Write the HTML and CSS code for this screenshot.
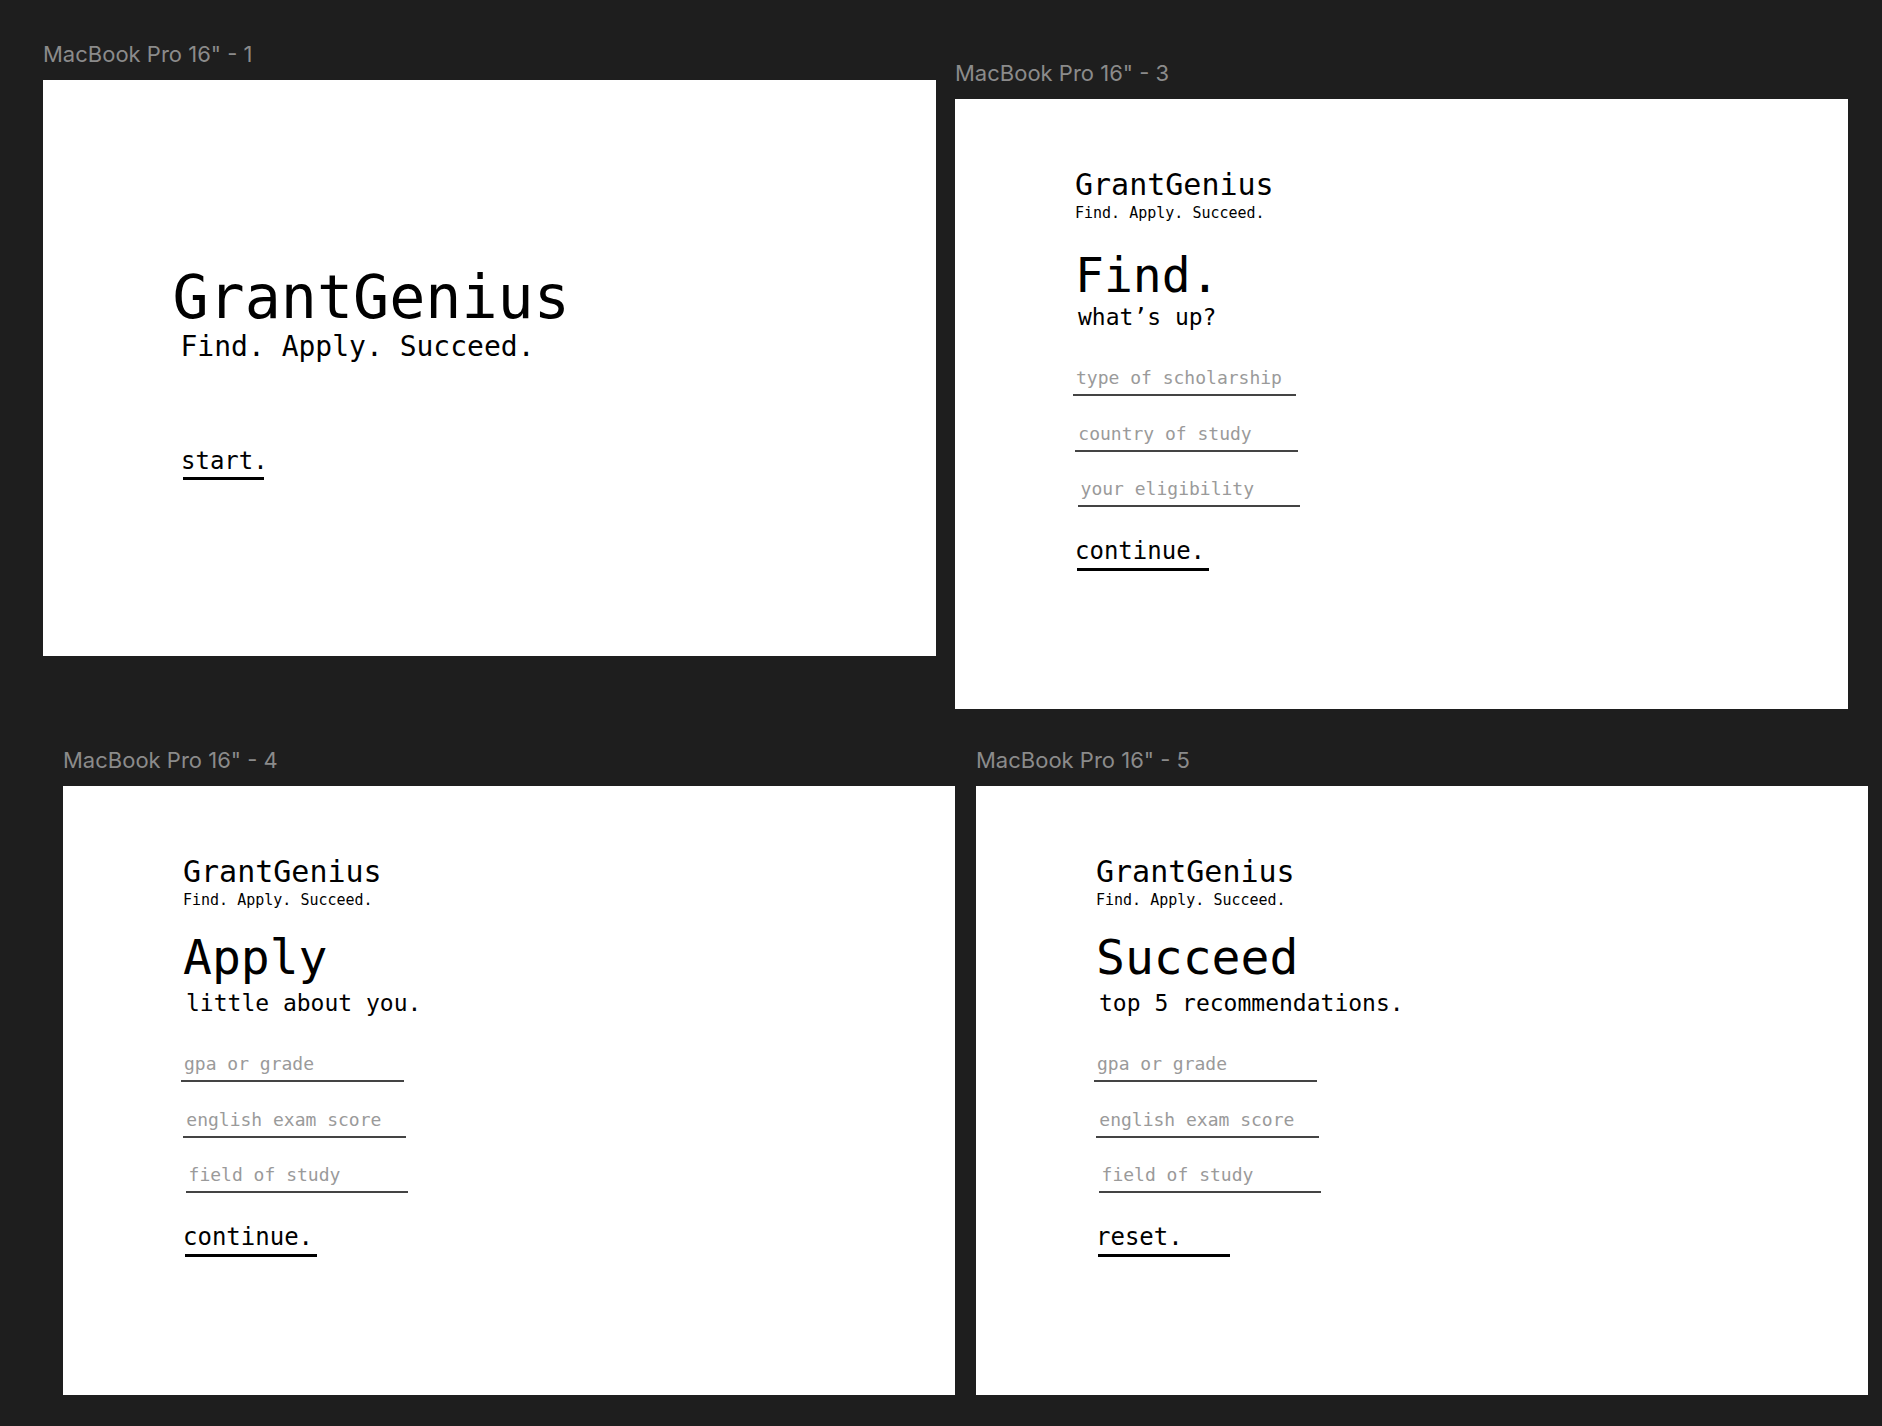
FILE: index.html
```html
<!DOCTYPE html>
<html lang="en">
<head>
<meta charset="utf-8">
<title>GrantGenius – frames</title>
<link rel="stylesheet" href="styles.css">
</head>
<body>
<main class="canvas">
  <div class="row row-top">
    <section class="board board-1">
      <div class="board-label">MacBook Pro 16" - 1</div>
      <div class="frame frame-short">
        <div class="splash">
          <h1 class="splash-title">GrantGenius</h1>
          <p class="splash-tagline">Find. Apply. Succeed.</p>
          <a class="cta cta-start">start.</a>
        </div>
      </div>
    </section>

    <section class="board board-3">
      <div class="board-label">MacBook Pro 16" - 3</div>
      <div class="frame">
        <div class="screen screen-find">
          <div class="brand">GrantGenius</div>
          <div class="brand-tag">Find. Apply. Succeed.</div>
          <h2 class="step-title">Find.</h2>
          <p class="step-sub">what’s up?</p>
          <div class="fields">
            <div class="field">type of scholarship</div>
            <div class="field">country of study</div>
            <div class="field">your eligibility</div>
          </div>
          <a class="cta">continue.</a>
        </div>
      </div>
    </section>
  </div>

  <div class="row row-bottom">
    <section class="board board-4">
      <div class="board-label">MacBook Pro 16" - 4</div>
      <div class="frame">
        <div class="screen">
          <div class="brand">GrantGenius</div>
          <div class="brand-tag">Find. Apply. Succeed.</div>
          <h2 class="step-title">Apply</h2>
          <p class="step-sub">little about you.</p>
          <div class="fields">
            <div class="field">gpa or grade</div>
            <div class="field">english exam score</div>
            <div class="field">field of study</div>
          </div>
          <a class="cta">continue.</a>
        </div>
      </div>
    </section>

    <section class="board board-5">
      <div class="board-label">MacBook Pro 16" - 5</div>
      <div class="frame">
        <div class="screen">
          <div class="brand">GrantGenius</div>
          <div class="brand-tag">Find. Apply. Succeed.</div>
          <h2 class="step-title">Succeed</h2>
          <p class="step-sub">top 5 recommendations.</p>
          <div class="fields">
            <div class="field">gpa or grade</div>
            <div class="field">english exam score</div>
            <div class="field">field of study</div>
          </div>
          <a class="cta">reset.</a>
        </div>
      </div>
    </section>
  </div>
</main>
</body>
</html>
```
FILE: styles.css
```css
html, body {
  margin: 0;
  background: #1e1e1e;
}

body {
  font-family: Inter, "Noto Sans", sans-serif;
  min-height: 1426px;
}

.canvas {
  padding-top: 42px;
}

.row {
  display: flex;
  align-items: flex-start;
}

.row-top {
  padding-left: 43px;
}

.row-bottom {
  padding-left: 63px;
  margin-top: 39px;
}

.board-3 {
  margin-left: 19px;
  margin-top: 19px;
}

.board-5 {
  margin-left: 21px;
}

.board-label {
  height: 24px;
  line-height: 24px;
  font-size: 22px;
  color: #8b8b8b;
  margin-bottom: 14px;
  white-space: nowrap;
}

.frame {
  background: #fff;
  width: 893px;
  height: 610px;
  box-sizing: border-box;
  font-family: "DejaVu Sans Mono", "Liberation Mono", monospace;
  color: #000;
}

.frame-short {
  height: 576px;
}

.board-4 .frame,
.board-5 .frame {
  width: 892px;
  height: 609px;
}

/* splash */
.splash {
  padding: 182.5px 0 0 129.5px;
}

.splash-title {
  margin: 0;
  font-size: 60px;
  line-height: 68px;
  font-weight: normal;
}

.splash-tagline {
  margin: 0 0 0 8px;
  font-size: 28px;
  line-height: 32px;
}

/* call to action */
.cta {
  display: block;
  width: 132px;
  font-size: 24px;
  line-height: 28px;
  padding-bottom: 3px;
  border-bottom: 3px solid #000;
  color: #000;
  text-decoration: none;
  text-indent: -2px;
  white-space: nowrap;
}

.cta-start {
  width: 81px;
  margin: 84px 0 0 10.5px;
  padding-bottom: 2px;
  text-indent: -2px;
}

/* step screens */
.screen {
  padding: 67.5px 0 0 120px;
}

.brand {
  font-size: 30px;
  line-height: 36px;
}

.brand-tag {
  font-size: 15px;
  line-height: 18px;
  margin-top: 1px;
}

.step-title {
  margin: 20px 0 0;
  font-size: 48px;
  line-height: 56px;
  font-weight: normal;
}

.step-sub {
  margin: 4.5px 0 0 3px;
  font-size: 23px;
  line-height: 28px;
}

.screen-find .step-title {
  margin-top: 25px;
}

.screen-find .step-sub {
  margin-top: 0.5px;
}

.fields {
  margin: 36px 0 0 -2px;
  display: flex;
  flex-direction: column;
  align-items: flex-start;
  gap: 26.5px;
}

.field {
  width: 222.5px;
  box-sizing: border-box;
  padding: 0 0 5px 3px;
  font-size: 18px;
  line-height: 22px;
  color: #9a9a9a;
  border-bottom: 2px solid #444;
}

.field:nth-child(2) {
  margin-left: 2.3px;
}

.field:nth-child(3) {
  margin-left: 4.6px;
}

.screen .cta {
  margin-top: 30px;
  margin-left: 2px;
}
```
